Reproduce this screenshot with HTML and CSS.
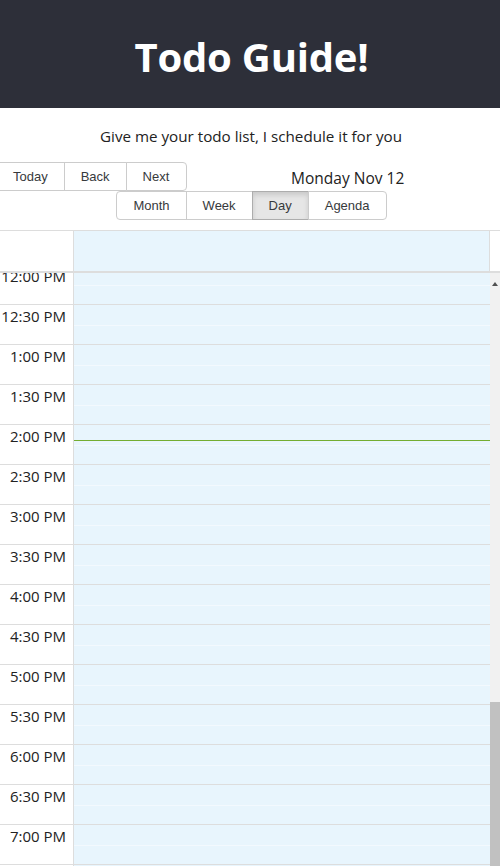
FILE: index.html
```html
<!DOCTYPE html>
<html>
<head>
<meta charset="utf-8">
<link rel="stylesheet" href="styles.css">
</head>
<body>
<header class="app-header"><h1 class="title">Todo Guide!</h1></header>
<p class="subtitle">Give me your todo list, I schedule it for you</p>
<div class="toolbar">
  <div class="row row-nav">
    <div class="btn-group nav-group">
      <button class="btn">Today</button><button class="btn">Back</button><button class="btn">Next</button>
    </div>
    <span class="label">Monday Nov 12</span>
  </div>
  <div class="row row-views">
    <div class="btn-group">
      <button class="btn">Month</button><button class="btn">Week</button><button class="btn active">Day</button><button class="btn">Agenda</button>
    </div>
  </div>
</div>
<div class="calendar">
  <div class="time-header">
    <div class="gutter-head"></div>
    <div class="day-head"></div>
    <div class="scroll-head"></div>
  </div>
  <div class="time-content">
    <div class="groups">
      <div class="group"><div class="gutter-cell">12:00 PM</div><div class="day-cell"><div class="slot"></div><div class="slot"></div></div></div>
      <div class="group"><div class="gutter-cell">12:30 PM</div><div class="day-cell"><div class="slot"></div><div class="slot"></div></div></div>
      <div class="group"><div class="gutter-cell">1:00 PM</div><div class="day-cell"><div class="slot"></div><div class="slot"></div></div></div>
      <div class="group"><div class="gutter-cell">1:30 PM</div><div class="day-cell"><div class="slot"></div><div class="slot"></div></div></div>
      <div class="group"><div class="gutter-cell">2:00 PM</div><div class="day-cell"><div class="slot"></div><div class="slot"></div><div class="now-line"></div></div></div>
      <div class="group"><div class="gutter-cell">2:30 PM</div><div class="day-cell"><div class="slot"></div><div class="slot"></div></div></div>
      <div class="group"><div class="gutter-cell">3:00 PM</div><div class="day-cell"><div class="slot"></div><div class="slot"></div></div></div>
      <div class="group"><div class="gutter-cell">3:30 PM</div><div class="day-cell"><div class="slot"></div><div class="slot"></div></div></div>
      <div class="group"><div class="gutter-cell">4:00 PM</div><div class="day-cell"><div class="slot"></div><div class="slot"></div></div></div>
      <div class="group"><div class="gutter-cell">4:30 PM</div><div class="day-cell"><div class="slot"></div><div class="slot"></div></div></div>
      <div class="group"><div class="gutter-cell">5:00 PM</div><div class="day-cell"><div class="slot"></div><div class="slot"></div></div></div>
      <div class="group"><div class="gutter-cell">5:30 PM</div><div class="day-cell"><div class="slot"></div><div class="slot"></div></div></div>
      <div class="group"><div class="gutter-cell">6:00 PM</div><div class="day-cell"><div class="slot"></div><div class="slot"></div></div></div>
      <div class="group"><div class="gutter-cell">6:30 PM</div><div class="day-cell"><div class="slot"></div><div class="slot"></div></div></div>
      <div class="group"><div class="gutter-cell">7:00 PM</div><div class="day-cell"><div class="slot"></div><div class="slot"></div></div></div>
      <div class="group"><div class="gutter-cell">7:30 PM</div><div class="day-cell"><div class="slot"></div><div class="slot"></div></div></div>
    </div>
    <div class="scrollbar">
      <span class="arrow"></span>
      <span class="thumb"></span>
    </div>
  </div>
</div>
</body>
</html>
```
FILE: styles.css
```css
html, body {
  margin: 0;
  padding: 0;
  height: 866px;
  overflow: hidden;
  background: #fff;
  font-family: "Open Sans", "Noto Sans", sans-serif;
  color: #222;
}
.app-header {
  height: 108px;
  background: #2d2f39;
  display: flex;
  align-items: center;
  justify-content: center;
}
.title {
  margin: 0;
  padding-top: 4px;
  padding-left: 3px;
  color: #fff;
  font-size: 40px;
  font-weight: 700;
  letter-spacing: -0.2px;
}
.subtitle {
  margin: 0;
  height: 54px;
  line-height: 56px;
  text-align: center;
  font-size: 15.2px;
  padding-left: 2px;
}
.toolbar {
  display: flex;
  flex-direction: column;
}
.row {
  display: flex;
  align-items: center;
}
.row-nav {
  margin-left: -4px;
}
.row-views {
  justify-content: center;
  padding-left: 3px;
}
.btn-group {
  display: flex;
}
.btn {
  font-family: "Liberation Sans", Arial, sans-serif;
  font-size: 13px;
  color: #373a3c;
  background: #fff;
  border: 1px solid #ccc;
  margin: 0;
  padding: 6px 16px 6px;
  line-height: 15px;
  height: 29px;
  cursor: pointer;
}
.nav-group .btn:last-child {
  padding-right: 17px;
}
.btn + .btn {
  margin-left: -1px;
}
.btn:first-child {
  border-radius: 4px 0 0 4px;
}
.btn:last-child {
  border-radius: 0 4px 4px 0;
}
.btn.active {
  background: #e6e6e6;
  border-color: #adadad;
  box-shadow: inset 0 3px 5px rgba(0,0,0,0.125);
}
.label {
  flex: 1;
  text-align: center;
  font-size: 15.5px;
  margin-right: -8px;
  padding-top: 2px;
}
.calendar {
  margin-top: 10px;
  border-top: 1px solid #ddd;
}
.time-header {
  display: flex;
  height: 40px;
}
.gutter-head {
  width: 73px;
  border-right: 1px solid #ddd;
}
.day-head {
  flex: 1;
  background: #e8f5fd;
}
.scroll-head {
  width: 10px;
  border-left: 1px solid #ddd;
}
.time-content {
  display: flex;
  border-top: 2px solid #ddd;
  height: 593px;
  overflow: hidden;
}
.groups {
  flex: 1;
  margin-top: -8px;
}
.group {
  display: flex;
  height: 40px;
  border-bottom: 1px solid #ddd;
  box-sizing: border-box;
}
.gutter-cell {
  width: 66px;
  padding-right: 7px;
  border-right: 1px solid #ddd;
  text-align: right;
  font-size: 15px;
  line-height: 23px;
  color: #222;
}
.day-cell {
  flex: 1;
  position: relative;
  background: #e8f5fd;
  display: flex;
  flex-direction: column;
}
.slot {
  flex: 1;
}
.slot:first-child {
  flex: none;
  height: 20px;
}
.slot + .slot {
  border-top: 1px solid #f3f9fe;
}
.now-line {
  position: absolute;
  left: 0;
  right: 0;
  top: 15px;
  height: 1px;
  background: #74ad31;
}
.scrollbar {
  width: 10px;
  background: #f1f1f1;
  display: flex;
  flex-direction: column;
  justify-content: space-between;
  align-items: center;
}
.arrow {
  margin-top: 9px;
  width: 0;
  height: 0;
  border-left: 3px solid transparent;
  border-right: 3px solid transparent;
  border-bottom: 4px solid #505050;
}
.thumb {
  width: 10px;
  height: 164px;
  background: #c1c1c1;
}
```
